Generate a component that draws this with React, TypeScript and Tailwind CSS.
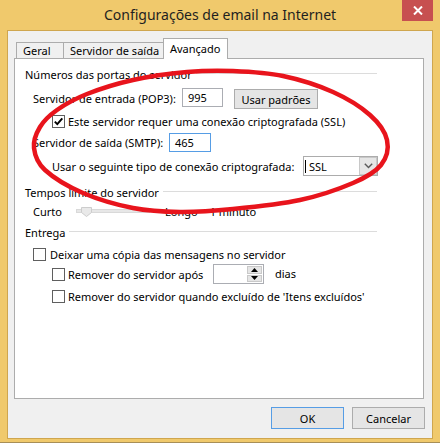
import React from "react";

type P = [number, number];

function smoothClosed(pts: P[]): string {
  const n = pts.length;
  let d = `M${pts[0][0]},${pts[0][1]}`;
  for (let i = 0; i < n; i++) {
    const p0 = pts[(i - 1 + n) % n];
    const p1 = pts[i];
    const p2 = pts[(i + 1) % n];
    const p3 = pts[(i + 2) % n];
    const c1x = p1[0] + (p2[0] - p0[0]) / 6;
    const c1y = p1[1] + (p2[1] - p0[1]) / 6;
    const c2x = p2[0] - (p3[0] - p1[0]) / 6;
    const c2y = p2[1] - (p3[1] - p1[1]) / 6;
    d += ` C${c1x.toFixed(1)},${c1y.toFixed(1)} ${c2x.toFixed(1)},${c2y.toFixed(1)} ${p2[0]},${p2[1]}`;
  }
  return d + " Z";
}

const ellipsePts: P[] = [
  [133, 80], [187, 72], [233, 71], [283, 76], [333, 92], [370, 115], [387, 140],
  [381, 165], [353, 183], [300, 200], [233, 209], [180, 212], [133, 208],
  [83, 193], [45, 170], [34, 148], [40, 127], [57, 110], [87, 94],
];

function Check({ checked = false }: { checked?: boolean }) {
  return (
    <div className="w-[13px] h-[13px] border border-[#5f5f5f] bg-white shrink-0 flex items-center justify-center">
      {checked && (
        <svg width="11" height="11" viewBox="0 0 11 11">
          <path d="M1.8 5.6 L4.3 8.2 L9.3 2.3" fill="none" stroke="#000" strokeWidth="1.9" />
        </svg>
      )}
    </div>
  );
}

function GroupHeader({ title, mt }: { title: string; mt: string }) {
  return (
    <div className={`flex items-center h-[14px] pl-[10px] pr-[46px] ${mt}`}>
      <span className="whitespace-nowrap">{title}</span>
      <div className="flex-1 h-px bg-[#dcdcdc] ml-[4px] -mt-[1px]" />
    </div>
  );
}

export default function App() {
  return (
    <div className="relative w-[440px] h-[446px] bg-white font-['Noto_Sans',sans-serif] text-[11px] text-black leading-none">
      <div className="w-[440px] h-[443px] bg-[#F0C96C] border-b border-[#a88f57] flex flex-col">
        {/* Title bar */}
        <div className="relative h-[30px] flex items-center justify-center">
          <span className="text-[14px] text-[#1f1f1f] whitespace-nowrap">Configurações de email na Internet</span>
          <div className="absolute top-0 right-[7px] w-[31px] h-[21px] bg-[#C75050] flex items-center justify-center">
            <svg width="10" height="9" viewBox="0 0 10 9">
              <path d="M1 0.5 L9 8.5 M9 0.5 L1 8.5" stroke="#fff" strokeWidth="2" />
            </svg>
          </div>
        </div>

        {/* Client area */}
        <div className="mx-[7px] h-[409px] border border-[#cfa64f] bg-[#F0F0F0] flex flex-col pt-[7px] pl-[6px] pr-[8px]">
          {/* Tabs */}
          <div className="relative z-10 flex items-end h-[21px] -mb-px pl-[2px]">
            <div className="w-[48px] h-[17px] border border-[#acacac] bg-[#f0f0f0] pl-[6px] flex items-center">
              <span className="whitespace-nowrap">Geral</span>
            </div>
            <div className="-ml-px w-[101px] h-[17px] border border-[#acacac] bg-[#f0f0f0] pl-[6px] flex items-center">
              <span className="whitespace-nowrap">Servidor de saída</span>
            </div>
            <div className="-ml-px w-[65px] h-[21px] border-t border-x border-[#acacac] bg-white pl-[6px] flex items-center pb-[1px]">
              <span className="whitespace-nowrap">Avançado</span>
            </div>
          </div>

          {/* Panel */}
          <div className="relative z-0 h-[341px] border border-[#acacac] bg-white flex flex-col">
            <GroupHeader title="Números das portas do servidor" mt="mt-[8px]" />

            {/* POP3 row */}
            <div className="mt-[7px] h-[20px] flex items-start pl-[18px]">
              <span className="w-[149px] whitespace-nowrap self-center">Servidor de entrada (POP3):</span>
              <div className="w-[41px] h-[19px] border border-[#abadb3] bg-white flex items-center pl-[5px]">995</div>
              <div className="ml-[11px] mt-[1px] w-[84px] h-[20px] border border-[#acacac] bg-[#e5e5e5] flex items-center justify-center">
                <span className="whitespace-nowrap">Usar padrões</span>
              </div>
            </div>

            {/* SSL checkbox */}
            <div className="mt-[5px] h-[16px] flex items-center pl-[37px] gap-[3px]">
              <Check checked />
              <span className="whitespace-nowrap">Este servidor requer uma conexão criptografada (SSL)</span>
            </div>

            {/* SMTP row */}
            <div className="mt-[4px] h-[19px] flex items-center pl-[18px]">
              <span className="w-[136px] whitespace-nowrap">Servidor de saída (SMTP):</span>
              <div className="w-[42px] h-[19px] border border-[#569de5] bg-white flex items-center pl-[5px]">465</div>
            </div>

            {/* Encryption row */}
            <div className="mt-[4px] h-[20px] flex items-center pl-[37px]">
              <span className="w-[251px] whitespace-nowrap">Usar o seguinte tipo de conexão criptografada:</span>
              <div className="w-[75px] h-[20px] border border-[#acacac] bg-white flex items-center">
                <div className="w-px h-[13px] bg-black ml-[1px]" />
                <span className="ml-[3px] flex-1">SSL</span>
                <div className="w-[18px] h-[18px] border border-[#c8c8c8] bg-[#e6e6e6] flex items-center justify-center mr-0">
                  <svg width="9" height="6" viewBox="0 0 9 6">
                    <path d="M0.8 0.8 L4.5 4.6 L8.2 0.8" fill="none" stroke="#5a5a5a" strokeWidth="1.4" />
                  </svg>
                </div>
              </div>
            </div>

            <GroupHeader title="Tempos limite do servidor" mt="mt-[9px]" />

            {/* Slider row */}
            <div className="mt-[5px] h-[14px] flex items-center pl-[18px]">
              <span className="w-[43px] whitespace-nowrap">Curto</span>
              <div className="relative w-[74px] h-[4px] bg-[#e7e7e7] border border-[#d9d9d9]">
                <div className="absolute left-[4px] -top-[3px]">
                  <svg width="11" height="10" viewBox="0 0 11 10">
                    <path d="M0.5 0.5 H10.5 V5.5 L5.5 9.5 L0.5 5.5 Z" fill="#e9e9e9" stroke="#cdcdcd" />
                  </svg>
                </div>
              </div>
              <span className="ml-[15px] whitespace-nowrap">Longo</span>
              <span className="ml-[12px] whitespace-nowrap">1 minuto</span>
            </div>

            <GroupHeader title="Entrega" mt="mt-[7px]" />

            {/* Delivery */}
            <div className="mt-[7px] h-[16px] flex items-center pl-[18px] gap-[4px]">
              <Check />
              <span className="whitespace-nowrap">Deixar uma cópia das mensagens no servidor</span>
            </div>
            <div className="mt-[2px] h-[20px] flex items-center pl-[37px]">
              <Check />
              <span className="ml-[3px] w-[145px] whitespace-nowrap">Remover do servidor após</span>
              <div className="w-[51px] h-[20px] border border-[#abadb3] bg-white flex justify-end items-stretch p-[1px]">
                <div className="w-[15px] flex flex-col gap-px">
                  <div className="flex-1 bg-[#e5e5e5] border border-[#c9c9c9] flex items-center justify-center">
                    <svg width="7" height="4" viewBox="0 0 7 4"><path d="M0 4 L3.5 0 L7 4 Z" fill="#000" /></svg>
                  </div>
                  <div className="flex-1 bg-[#e5e5e5] border border-[#c9c9c9] flex items-center justify-center">
                    <svg width="7" height="4" viewBox="0 0 7 4"><path d="M0 0 L3.5 4 L7 0 Z" fill="#000" /></svg>
                  </div>
                </div>
              </div>
              <span className="ml-[11px] -mt-[2px] whitespace-nowrap">dias</span>
            </div>
            <div className="mt-[4px] h-[16px] flex items-center pl-[37px] gap-[3px]">
              <Check />
              <span className="whitespace-nowrap">Remover do servidor quando excluído de 'Itens excluídos'</span>
            </div>
          </div>

          {/* Buttons */}
          <div className="mt-[8px] flex justify-end gap-[8px] -mr-px">
            <div className="w-[73px] h-[22px] border border-[#569de5] bg-[#e5e5e5] flex items-center justify-center">OK</div>
            <div className="w-[73px] h-[22px] border border-[#acacac] bg-[#e5e5e5] flex items-center justify-center">Cancelar</div>
          </div>
        </div>
      </div>

      {/* Red annotation ellipse */}
      <svg className="absolute top-0 left-0 pointer-events-none" width="440" height="446" viewBox="0 0 440 446">
        <path d={smoothClosed(ellipsePts)} fill="none" stroke="#E8141C" strokeWidth="4.5" />
      </svg>
    </div>
  );
}
